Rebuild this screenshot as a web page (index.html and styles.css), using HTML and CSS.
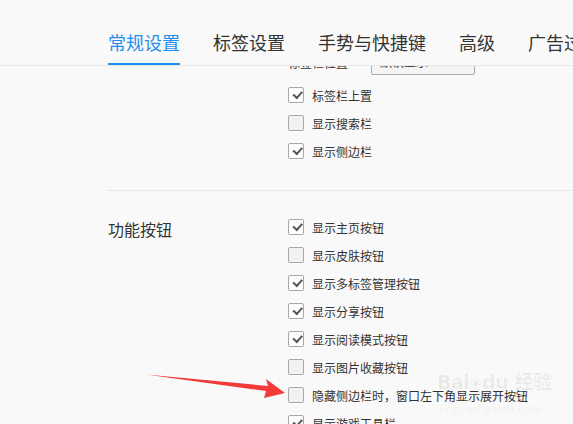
FILE: index.html
```html
<!DOCTYPE html>
<html lang="zh-CN">
<head>
<meta charset="utf-8">
<link rel="stylesheet" href="styles.css">
</head>
<body>
<div class="page">
  <nav class="header">
    <div class="tab active">常规设置</div>
    <div class="tab">标签设置</div>
    <div class="tab">手势与快捷键</div>
    <div class="tab">高级</div>
    <div class="tab">广告过滤</div>
  </nav>
  <main class="main">
    <div class="scroll">
      <section class="section first">
        <div class="sec-label"></div>
        <div class="options">
          <div class="select-row">
            <span class="select-label">标签栏位置</span>
            <div class="select">默认显示</div>
          </div>
          <label class="opt"><span class="cb checked"></span>标签栏上置</label>
          <label class="opt"><span class="cb"></span>显示搜索栏</label>
          <label class="opt"><span class="cb checked"></span>显示侧边栏</label>
        </div>
      </section>
      <section class="section second">
        <div class="sec-label">功能按钮</div>
        <div class="options">
          <label class="opt"><span class="cb checked"></span>显示主页按钮</label>
          <label class="opt"><span class="cb"></span>显示皮肤按钮</label>
          <label class="opt"><span class="cb checked"></span>显示多标签管理按钮</label>
          <label class="opt"><span class="cb checked"></span>显示分享按钮</label>
          <label class="opt"><span class="cb checked"></span>显示阅读模式按钮</label>
          <label class="opt"><span class="cb"></span>显示图片收藏按钮</label>
          <label class="opt"><span class="cb"></span>隐藏侧边栏时，窗口左下角显示展开按钮</label>
          <label class="opt"><span class="cb checked"></span>显示游戏工具栏</label>
        </div>
      </section>
    </div>
  </main>
  <div class="watermark">
    <div class="wm-top">Bai<span class="paw">❀</span>du 经验</div>
    <div class="wm-bottom">jingyan.baidu.com</div>
  </div>
  <svg class="arrow" width="573" height="424" viewBox="0 0 573 424">
    <polygon points="146,374.5 268,386 266,379 285,393 264,398 266,391" fill="#f23a3a"/>
  </svg>
</div>
</body>
</html>
```
FILE: styles.css
```css
html, body {
  margin: 0;
  padding: 0;
}
body {
  background: #f9f9f9;
  font-family: "Noto Sans CJK SC", "Noto Sans", sans-serif;
  color: #333;
  width: 573px;
  height: 424px;
  overflow: hidden;
}
.page {
  position: relative;
  width: 573px;
  height: 424px;
  overflow: hidden;
  display: flex;
  flex-direction: column;
}
.header {
  flex: none;
  height: 65px;
  border-bottom: 1px solid #e8e8e8;
  display: flex;
  gap: 33px;
  padding-left: 108px;
  white-space: nowrap;
  box-sizing: content-box;
}
.tab {
  font-size: 18px;
  line-height: 24px;
  padding-top: 30px;
  height: 33px;
  border-bottom: 2px solid transparent;
  color: #333;
}
.tab.active {
  color: #1f8ef1;
  border-bottom-color: #1f8ef1;
}
.main {
  flex: 1;
  overflow: hidden;
}
.scroll {
  margin-top: -21px;
}
.section {
  display: grid;
  grid-template-columns: 180px 1fr;
  margin-left: 108px;
}
.section.first {
  padding-bottom: 25px;
  border-bottom: 1px solid #e6e6e6;
}
.section.second {
  padding-top: 22px;
}
.sec-label {
  font-size: 16px;
  line-height: 28px;
  padding-top: 2px;
  color: #333;
}
.options {
  display: flex;
  flex-direction: column;
}
.select-row {
  height: 30px;
  display: flex;
  align-items: flex-start;
  margin-bottom: 6px;
  font-size: 12px;
}
.select-label {
  margin-top: 10px;
  line-height: 16px;
  width: 83px;
}
.select {
  margin-top: 4px;
  width: 102px;
  height: 24px;
  border: 1px solid #aaa;
  border-radius: 2px;
  background: #f4f4f4;
  box-sizing: content-box;
  line-height: 24px;
  text-indent: 8px;
}
.opt {
  height: 28px;
  display: flex;
  align-items: center;
  gap: 8px;
  font-size: 12px;
  color: #333;
  white-space: nowrap;
}
.cb {
  width: 14px;
  height: 14px;
  border: 1px solid #a8a8a8;
  border-radius: 2px;
  background: #f1f1f1;
  position: relative;
  flex: none;
}
.cb.checked {
  background: #fcfcfc;
}
.cb.checked::after {
  content: "";
  position: absolute;
  left: 3.5px;
  top: 3px;
  width: 7px;
  height: 3.5px;
  border-left: 2px solid #555;
  border-bottom: 2px solid #555;
  transform: rotate(-48deg);
}
.arrow {
  position: absolute;
  left: 0;
  top: 0;
  pointer-events: none;
}
.watermark {
  position: absolute;
  left: 437px;
  top: 370px;
  color: rgba(0, 0, 0, 0.06);
  pointer-events: none;
  font-family: "DejaVu Sans", "Noto Sans CJK SC", sans-serif;
}
.wm-top {
  font-size: 19px;
  line-height: 24px;
  font-weight: bold;
  white-space: nowrap;
  letter-spacing: -0.5px;
}
.paw {
  font-size: 16px;
}
.wm-bottom {
  font-size: 11px;
  line-height: 12px;
  margin-left: 3px;
  margin-top: 8px;
  white-space: nowrap;
}
```
